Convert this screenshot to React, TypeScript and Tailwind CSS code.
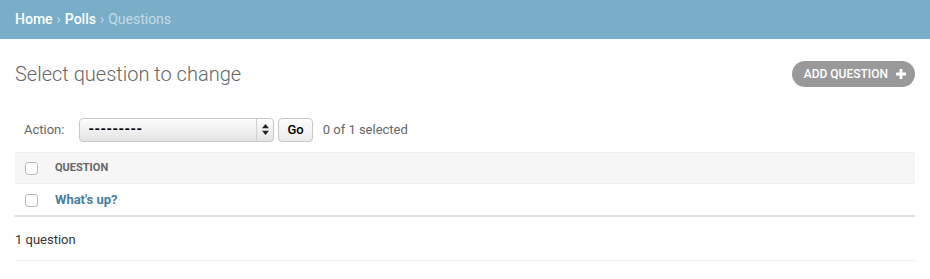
import React from 'react';

const font = { fontFamily: 'Roboto, "Liberation Sans", sans-serif' };

const Checkbox: React.FC = () => (
  <span className="inline-block w-[13px] h-[13px] rounded-[3px] border border-[#b9b9b9] bg-white" />
);

const App: React.FC = () => {
  return (
    <div className="w-[930px] h-[279px] bg-white text-[#333]" style={font}>
      {/* Breadcrumbs */}
      <div className="h-[39px] bg-[#79aec8] px-[15px] flex items-center text-[14px] text-white">
        <span className="font-medium">Home</span>
        <span className="mx-[4px] text-[#c4dce8]">›</span>
        <span className="font-medium">Polls</span>
        <span className="mx-[4px] text-[#c4dce8]">›</span>
        <span className="text-[#c4dce8]">Questions</span>
      </div>

      <div className="px-[15px]">
        {/* Title */}
        <div className="flex items-center justify-between h-[68px] pt-[2px]">
          <h1 className="text-[20px] font-light text-[#666]">Select question to change</h1>
          <button className="flex items-center gap-[8px] h-[26px] pl-[12px] pr-[9px] rounded-full bg-[#999] text-white text-[12px] font-medium uppercase">
            Add question
            <svg width="10" height="10" viewBox="0 0 10 10">
              <path d="M3.6 0h2.8v3.6H10v2.8H6.4V10H3.6V6.4H0V3.6h3.6z" fill="#fff" />
            </svg>
          </button>
        </div>

        {/* Actions */}
        <div className="flex items-center h-[45px] pl-[9px] text-[13px]">
          <span className="text-[#666]">Action:</span>
          <div className="ml-[15px] flex items-center w-[195px] h-[24px] rounded-[4px] border border-[#c8c8c8] bg-gradient-to-b from-[#fdfdfd] to-[#e4e4e4] shadow-[inset_0_1px_0_#fff]">
            <span className="flex-1 pl-[8px] text-[14px] font-bold text-black tracking-[0.5px]">---------</span>
            <span className="w-[17px] h-full border-l border-[#d0d0d0] flex items-center justify-center">
              <svg width="7" height="11" viewBox="0 0 7 11">
                <path d="M3.5 0L7 4.3H0z M3.5 11L0 6.7h7z" fill="#222" />
              </svg>
            </span>
          </div>
          <button className="ml-[4px] h-[24px] px-[8px] rounded-[4px] border border-[#c8c8c8] bg-gradient-to-b from-[#fdfdfd] to-[#ececec] text-[13px] font-medium text-black">
            Go
          </button>
          <span className="ml-[10px] text-[#666]">0 of 1 selected</span>
        </div>

        {/* Table */}
        <div>
          <div className="h-[32px] flex items-center bg-[#f6f6f6] border-t border-b border-[#eee] pl-[10px]">
            <Checkbox />
            <span className="ml-[17px] text-[11px] font-bold text-[#666] uppercase">Question</span>
          </div>
          <div className="h-[33px] flex items-center border-b-2 border-[#ddd] pl-[10px] pt-[1px]">
            <Checkbox />
            <span className="ml-[17px] text-[13px] font-bold text-[#447e9b]">What's up?</span>
          </div>
          <div className="h-[44px] flex items-center border-b border-[#eee] text-[13px] text-[#333] pt-[2px]">
            1 question
          </div>
        </div>
      </div>
    </div>
  );
};

export default App;
